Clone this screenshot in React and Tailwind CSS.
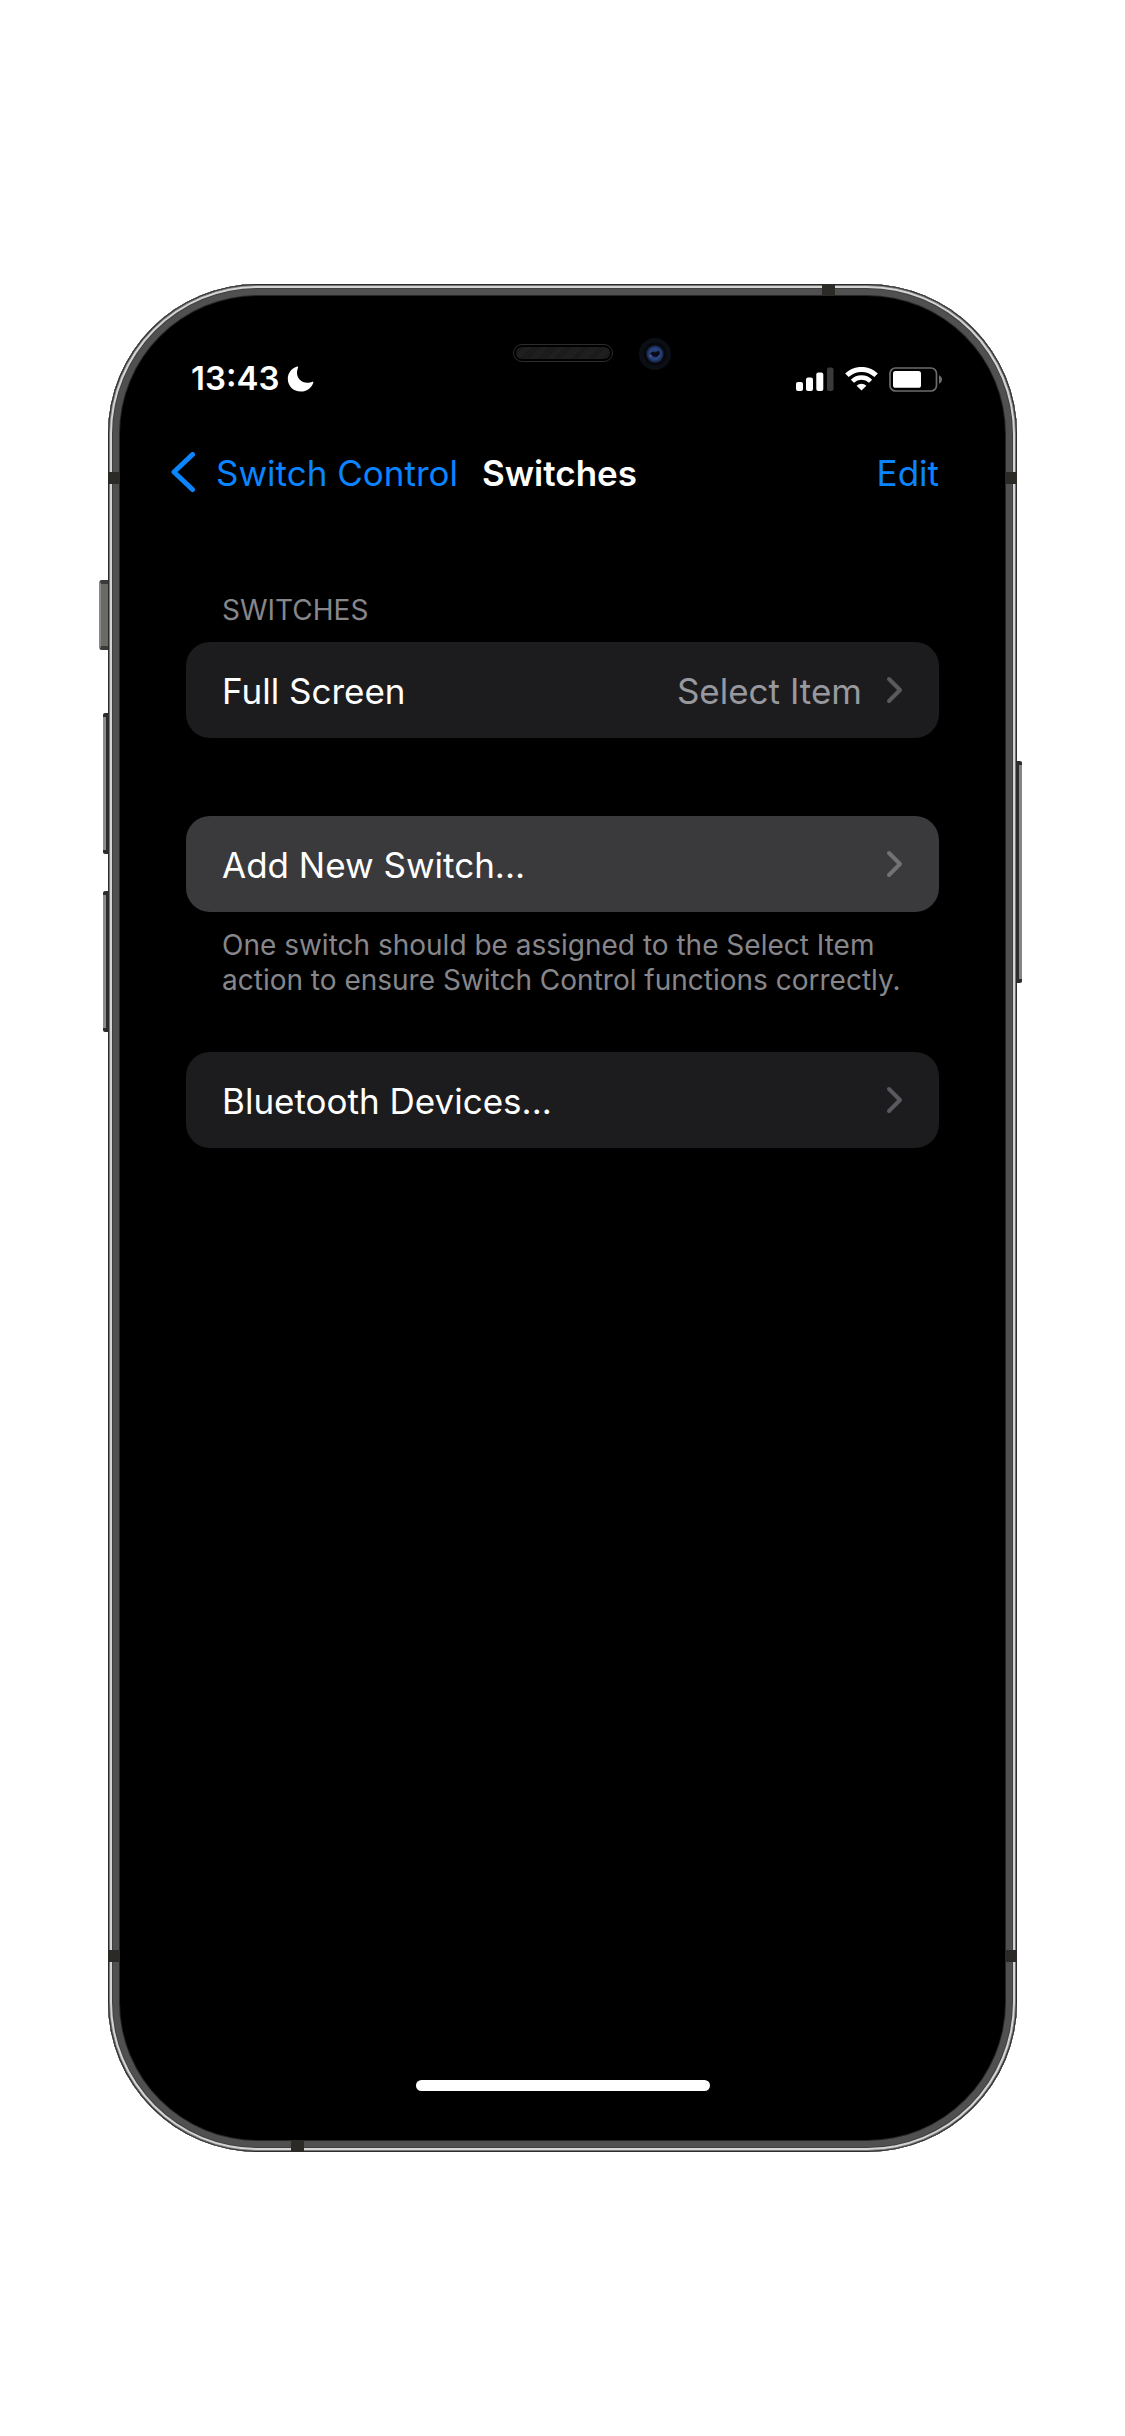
import React from "react";

function StatusIcons() {
  return (
    <div className="flex items-center gap-[11px]" role="img" aria-label="Signal, Wi-Fi and battery">
      <svg width="38" height="24" viewBox="0 0 38 24" fill="#fff">
        <rect x="0" y="15" width="7" height="9" rx="2" />
        <rect x="10" y="10.5" width="7" height="13.5" rx="2" />
        <rect x="20.3" y="5.5" width="7" height="18.5" rx="2" />
        <rect x="31" y="0.5" width="6.5" height="23.5" rx="2" fill="#3a3a3a" />
      </svg>
      <svg width="33" height="24" viewBox="0 0 33 24" fill="none" stroke="#fff">
        <path d="M1.9 8.3 A21 21 0 0 1 31.1 8.3" strokeWidth="5" />
        <path d="M7.4 14.2 A13 13 0 0 1 25.6 14.2" strokeWidth="4.4" />
        <path d="M16.5 23.6 L11.6 18.7 A7.3 7.3 0 0 1 21.4 18.7 Z" fill="#fff" stroke="none" />
      </svg>
      <svg width="53" height="25" viewBox="0 0 53 25">
        <rect x="1" y="1" width="46.5" height="23" rx="5.5" fill="none" stroke="#6c6c6c" strokeWidth="1.7" />
        <rect x="4" y="4" width="28" height="16.8" rx="2.6" fill="#fff" />
        <path d="M50 8.3 Q53 9.6 53 12.5 Q53 15.4 50 16.7 Z" fill="#6c6c6c" />
      </svg>
    </div>
  );
}

function Row({ label, value, pressed }) {
  return (
    <button
      type="button"
      className={
        "flex h-24 w-full items-center rounded-[24px] pt-0.5 pr-9 pl-9 text-left text-[35px] text-white " +
        (pressed ? "bg-[#3a3a3c]" : "bg-[#1c1c1e]")
      }
    >
      <span className="flex-1">{label}</span>
      {value && <span className="mr-6 text-[#98989f]">{value}</span>}
      <svg width="17" height="30" viewBox="0 0 17 30" fill="none" stroke={pressed ? "#727275" : "#5a5a5e"} strokeWidth="4" strokeLinecap="round" strokeLinejoin="round">
        <path d="M3 3 L14 14 L3 25" />
      </svg>
    </button>
  );
}

function FrameDetails() {
  return (
    <div aria-hidden="true">
      <div className="absolute top-[296px] -left-[9px] h-[70px] w-[9px] rounded-l-[3px] border-y-4 border-l-2 border-y-[#3a3a3a] border-l-[#85878c] bg-[#6b6a62]" />
      <div className="absolute top-[429px] -left-[5px] h-[141px] w-[5px] rounded-l-[2px] border-y-4 border-r-2 border-[#2d2d2d] bg-[#8b8d8c]" />
      <div className="absolute top-[607px] -left-[5px] h-[141px] w-[5px] rounded-l-[2px] border-y-4 border-r-2 border-[#2d2d2d] bg-[#8b8d8c]" />
      <div className="absolute top-[477px] -right-[5px] h-[222px] w-[5px] rounded-r-[2px] border-y-4 border-l-2 border-[#2d2d2d] bg-[#858585]" />
      <div className="absolute top-[188px] left-0 h-3 w-3 bg-[#2b2a27]" />
      <div className="absolute top-[188px] right-0 h-3 w-3 bg-[#2b2a27]" />
      <div className="absolute bottom-[190px] left-0 h-3 w-3 bg-[#2b2a27]" />
      <div className="absolute right-0 bottom-[190px] h-3 w-3 bg-[#2b2a27]" />
      <div className="absolute top-0 right-[182px] h-3 w-[13px] bg-[#2b2a27]" />
      <div className="absolute bottom-0 left-[183px] h-3 w-[13px] bg-[#2b2a27]" />
      <div className="absolute inset-x-0 top-[60px] flex items-center justify-center">
        <div className="relative h-[18px] w-[100px] rounded-full border border-[#2c2c2c] bg-black p-[2px]">
          <div className="h-full rounded-full bg-[repeating-linear-gradient(135deg,#181818_0px,#181818_1px,#222222_1px,#222222_2px)]" />
          <svg className="absolute -top-2 left-[124px]" width="34" height="34" viewBox="0 0 34 34">
            <defs>
              <radialGradient id="lens">
                <stop offset="0" stopColor="#1b2c52" />
                <stop offset="0.6" stopColor="#2a4786" />
                <stop offset="1" stopColor="#14203f" />
              </radialGradient>
            </defs>
            <circle cx="17" cy="17" r="16" fill="#0b0f15" />
            <circle cx="17" cy="17" r="11.5" fill="#06080c" />
            <circle cx="17" cy="17" r="8.7" fill="url(#lens)" />
            <path d="M12 16.5 L14.5 14.5 L17 15.5 L21 13.5 L22 17 L18.5 20 L15 19.5 Z" fill="#080c18" />
            <circle cx="12.5" cy="19" r="1.5" fill="#5a4a8c" />
          </svg>
        </div>
      </div>
    </div>
  );
}

export default function App() {
  return (
    <div className="flex min-h-screen items-center bg-white px-27 font-['Inter','Liberation_Sans',sans-serif]">
      <div className="relative flex aspect-[909/1868] w-full flex-col rounded-[150px] bg-black shadow-[inset_0_0_0_1px_#2c2c2c,inset_0_0_0_2px_#777777,inset_0_0_0_4px_#d4d4d4,inset_0_0_0_5px_#404040,inset_0_0_0_11px_#505050,inset_0_0_0_12px_#262626]">
        <FrameDetails />

        <div className="flex h-[142px] items-end justify-between pr-[75px] pl-[83px] pb-[23px]">
          <div className="flex h-12 items-center gap-2 text-[33px] font-semibold text-white">
            <time>13:43</time>
            <svg width="27" height="26" viewBox="0 0 27 26" fill="#fff" role="img" aria-label="Do Not Disturb">
              <path d="M10.3 0.6 C10.8 0.3 11.4 0.8 11.1 1.5 C10.4 3 10 4.8 10 6.6 C10 12.6 14.2 16.8 20.2 16.8 C22 16.8 24 16.4 25.2 15.8 C26 15.4 26.6 16 26.3 16.7 C24.3 22.2 19.6 25.5 13.8 25.5 C6.3 25.5 0.8 20 0.8 12.7 C0.8 7 4.7 2.3 10.3 0.6 Z" />
            </svg>
          </div>
          <div className="flex h-12 items-center">
            <StatusIcons />
          </div>
        </div>

        <header className="mt-[17px] flex h-[60px] items-center pr-[78px] pl-[62px] text-[35px]">
          <button type="button" className="flex items-center gap-5 text-[#0a84ff]">
            <svg width="26" height="42" viewBox="0 0 26 42" fill="none" stroke="#0a84ff" strokeWidth="5" strokeLinecap="round" strokeLinejoin="round">
              <path d="M22.5 2.5 L4 20 L22.5 37.5" />
            </svg>
            Switch Control
          </button>
          <h1 className="ml-6 flex-1 font-semibold text-white">Switches</h1>
          <button type="button" className="text-[#0a84ff]">Edit</button>
        </header>

        <main className="flex-1 px-[78px] pt-[89px]">
          <h2 className="mb-3.5 pl-9 text-[28px] leading-[36px] text-[#86868b] uppercase">Switches</h2>
          <Row label="Full Screen" value="Select Item" />
          <div className="mt-[78px]">
            <Row label="Add New Switch..." pressed />
            <p className="mt-4 pr-6 pl-9 text-[28px] leading-[35px] text-[#86868b]">
              One switch should be assigned to the Select Item action to ensure Switch Control functions correctly.
            </p>
          </div>
          <div className="mt-[54px]">
            <Row label="Bluetooth Devices..." />
          </div>
        </main>

        <div className="mx-auto mb-[61px] h-[11px] w-[294px] rounded-full bg-white" />
      </div>
    </div>
  );
}
